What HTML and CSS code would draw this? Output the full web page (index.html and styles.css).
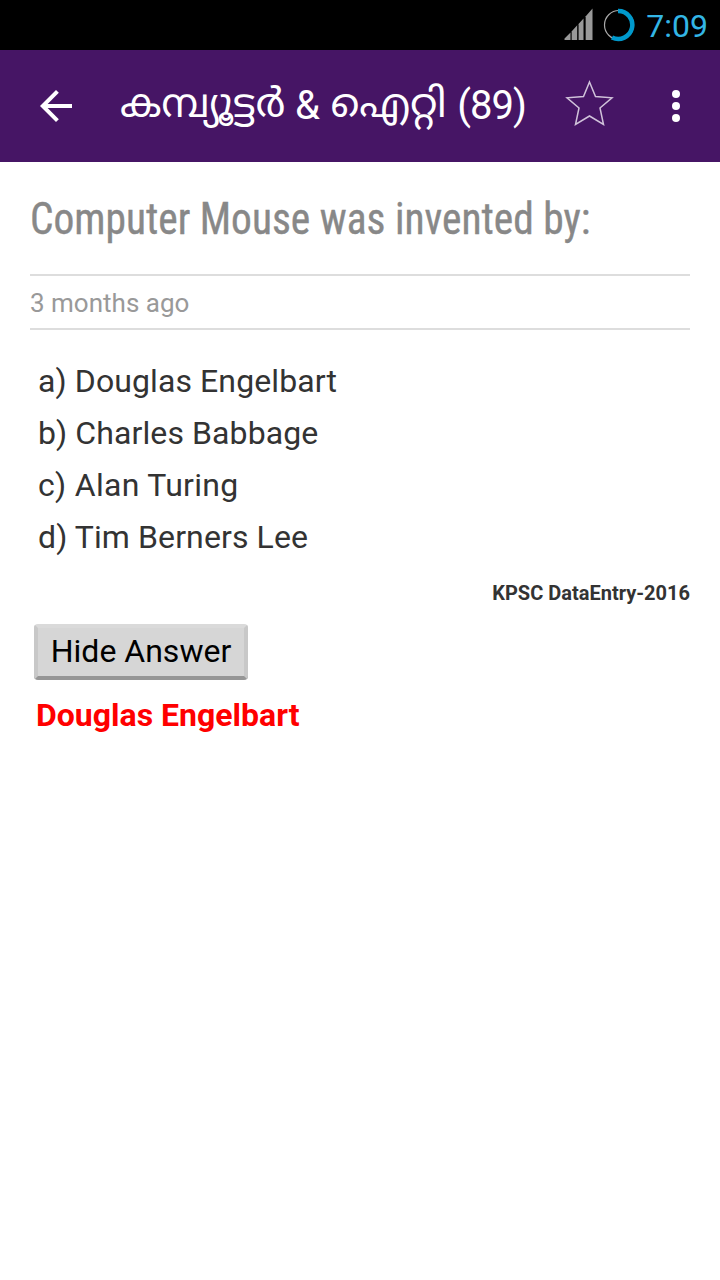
FILE: index.html
```html
<!DOCTYPE html>
<html lang="ml">
<head>
    <meta charset="UTF-8">
    <meta name="viewport" content="width=device-width, initial-scale=1.0">
    <title>കമ്പ്യൂട്ടർ &amp; ഐറ്റി</title>
    <link rel="stylesheet" href="styles.css">
</head>
<body>
    <!-- status bar -->
    <div class="status">
        <svg class="signal" width="30" height="34" viewBox="0 0 30 34">
            <path fill="#999" d="M0.500 33V31.500L6.500 25.500V33zM8 33V24L13 18.500V33zM14.500 33V17L19.500 11.500V33zM21 33V10L22 9V33zM22 33V9L28.500 1.500V33z"/>
            <path stroke="#333" d="M7.500 24V33M14 18V33M21.500 10V33"/>
        </svg>
        <svg class="battery" width="32" height="34" viewBox="0 0 32 34">
            <circle cx="16" cy="17" r="14.500" fill="none" stroke="#aaa" stroke-width="1.200"/>
            <path d="M15 3A14 14 0 1 1 9 29.500" fill="none" stroke="#0099cc" stroke-width="4.500"/>
        </svg>
        <span class="clock">7:09</span>
    </div>
    <!-- toolbar -->
    <div class="bar">
        <svg class="back" width="48" height="48" viewBox="0 0 24 24">
            <path fill="#fff" d="M20 11H7.830l5.590-5.590L12 4l-8 8 8 8 1.410-1.410L7.830 13H20v-2z"/>
        </svg>
        <h1 class="title">കമ്പ്യൂട്ടർ <span class="amp">&amp;</span> ഐറ്റി <span class="count">(89)</span></h1>
        <svg class="star" width="50" height="48" viewBox="0 0 50 48">
            <path fill="none" stroke="#d0c2da" stroke-width="1.500" d="M25.500 3L31.500 17.500L48 18.800L36 29L39.500 45.500L25.500 37L11.500 45.500L15 29L3 18.800L19.500 17.500z"/>
        </svg>
        <svg class="more" width="8" height="32" viewBox="0 0 8 32">
            <g fill="#fff"><circle cx="4" cy="4" r="4"/><circle cx="4" cy="16" r="4"/><circle cx="4" cy="28" r="4"/></g>
        </svg>
    </div>
    <!-- question -->
    <div class="content">
        <h2 class="question">Computer Mouse was invented by:</h2>
        <div class="date">3 months ago</div>
        <ul class="options">
            <li>a) Douglas Engelbart</li>
            <li>b) Charles Babbage</li>
            <li class="wide">c) Alan Turing</li>
            <li>d) Tim Berners Lee</li>
        </ul>
        <div class="source">KPSC DataEntry-2016</div>
        <button class="toggle">Hide Answer</button>
        <div class="answer">Douglas Engelbart</div>
    </div>
</body>
</html>
```
FILE: styles.css
```css
*{
    margin: 0;
    padding: 0;
    box-sizing: border-box;
    list-style: none;
}
body{
    width: 720px;
    min-height: 1280px;
    background-color: #fff;
    font-family: Roboto, "Liberation Sans", sans-serif;
    color: #333;
}
.status{
    display: flex;
    align-items: center;
    justify-content: flex-end;
    height: 50px;
    padding-right: 12px;
    background-color: #000;
}
.signal{
    margin-right: 9px;
    margin-top: -2px;
}
.battery{
    margin-right: 11px;
}
.clock{
    padding-top: 2px;
    font-size: 32px;
    line-height: 50px;
    color: #33b5e5;
}
.bar{
    display: flex;
    align-items: center;
    height: 112px;
    padding: 0 40px 0 32px;
    background-color: #461565;
}
.title{
    width: 444px;
    margin-left: 40px;
    padding-bottom: 4px;
    font-family: Roboto, "Noto Sans Malayalam", sans-serif;
    font-size: 40px;
    font-weight: 400;
    line-height: 60px;
    white-space: nowrap;
    color: #fff;
}
/* latin glyphs sit a little lower than the malayalam ones */
.amp,
.count{
    display: inline-block;
    line-height: 40px;
    vertical-align: -2px;
}
.amp{
    margin-right: 1px;
}
.count{
    margin-left: 1px;
    letter-spacing: -1px;
}
.star{
    margin-bottom: 6px;
}
.more{
    margin-left: auto;
}
.content{
    padding: 0 30px;
}
.question{
    height: 112px;
    padding-top: 30px;
    font-family: "Roboto Condensed", Roboto, sans-serif;
    font-stretch: 75%;
    font-size: 45px;
    font-weight: 400;
    line-height: 53px;
    white-space: nowrap;
    color: #888;
    -webkit-text-stroke: 0.4px #888;
    transform: scaleX(0.921);
    transform-origin: 0 0;
}
.date{
    height: 56px;
    border-top: 2px solid #ddd;
    border-bottom: 2px solid #ddd;
    font-size: 26px;
    line-height: 54px;
    color: #999;
}
.options{
    padding: 25px 8px 0;
    font-size: 32px;
    line-height: 52px;
    letter-spacing: 0.1px;
}
.wide{
    letter-spacing: 0.3px;
}
.source{
    margin-top: 17px;
    font-size: 20px;
    font-weight: 700;
    line-height: 26px;
    text-align: right;
}
.toggle{
    display: block;
    width: 214px;
    height: 56px;
    margin: 18px 0 0 4px;
    border: 4px solid;
    border-color: #dadada #c8c8c8 #969696 #c8c8c8;
    border-radius: 4px;
    background-color: #d6d6d6;
    font-family: inherit;
    font-size: 32px;
    line-height: 44px;
    padding-bottom: 2px;
    color: #000;
}
.answer{
    margin: 16px 0 0 6px;
    font-size: 32px;
    font-weight: 700;
    line-height: 38px;
    color: #f00;
}
```
